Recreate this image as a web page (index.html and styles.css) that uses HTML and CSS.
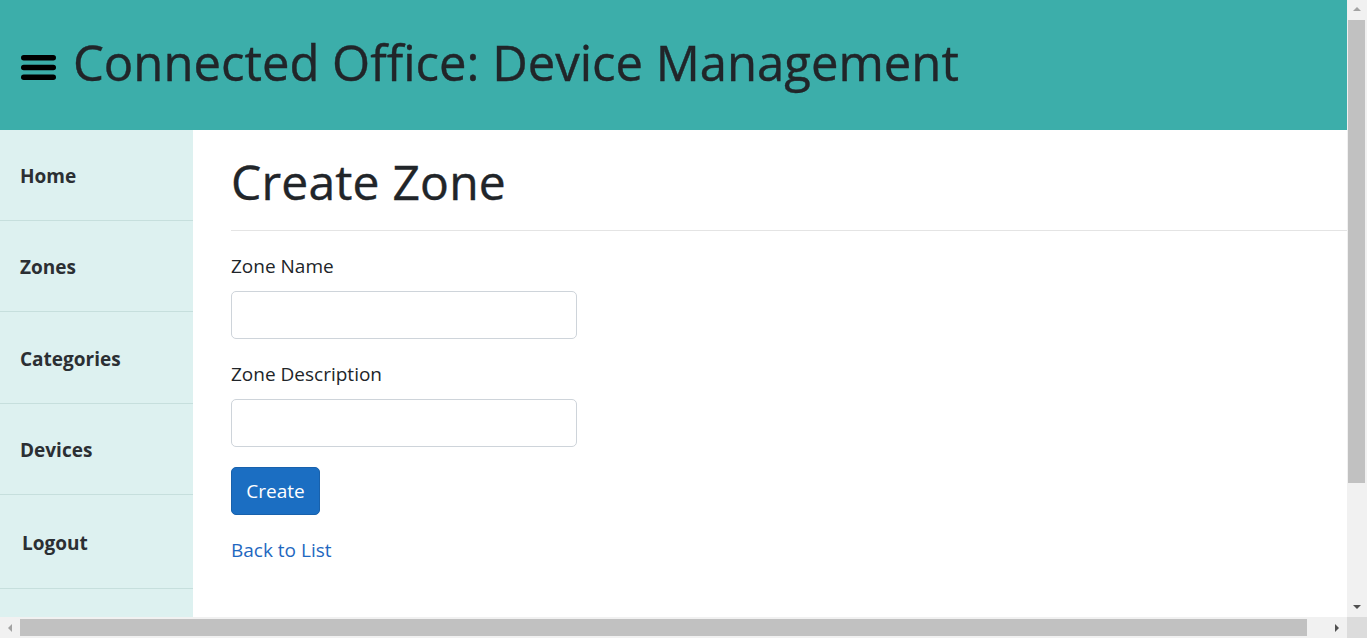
FILE: index.html
```html
<!DOCTYPE html>
<html lang="en">
<head>
<meta charset="utf-8">
<title>Create Zone - Connected Office</title>
<link rel="stylesheet" href="styles.css">
</head>
<body>
<div class="window">
  <div class="viewport">
    <div class="page">
      <header class="topbar">
        <svg class="burger" width="35" height="25" viewBox="0 0 35 25" aria-hidden="true">
          <rect x="0" y="0" width="35" height="5.5" rx="2.75" fill="#000"/>
          <rect x="0" y="9.75" width="35" height="5.5" rx="2.75" fill="#000"/>
          <rect x="0" y="19.5" width="35" height="5.5" rx="2.75" fill="#000"/>
        </svg>
        <h1 class="brand">Connected Office: Device Management</h1>
      </header>
      <div class="body-row">
        <nav class="sidebar">
          <a class="nav-item nav-home" href="#">Home</a>
          <a class="nav-item nav-zones" href="#">Zones</a>
          <a class="nav-item nav-categories" href="#">Categories</a>
          <a class="nav-item nav-devices" href="#">Devices</a>
          <a class="nav-item nav-logout" href="#">Logout</a>
        </nav>
        <main class="content">
          <h1 class="page-title">Create Zone</h1>
          <hr class="divider">
          <form class="zone-form">
            <div class="form-group">
              <label class="form-label" for="zname">Zone Name</label>
              <input class="form-input" id="zname" type="text">
            </div>
            <div class="form-group">
              <label class="form-label" for="zdesc">Zone Description</label>
              <input class="form-input" id="zdesc" type="text">
            </div>
            <div class="form-group">
              <button class="btn-primary" type="button">Create</button>
            </div>
          </form>
          <div class="back">
            <a class="back-link" href="#">Back to List</a>
          </div>
        </main>
      </div>
    </div>
  </div>
  <div class="vscroll" aria-hidden="true">
    <div class="sb-btn"><span class="tri tri-up"></span></div>
    <div class="vtrack"><div class="vthumb"></div></div>
    <div class="sb-btn"><span class="tri tri-down"></span></div>
  </div>
  <div class="hscroll" aria-hidden="true">
    <div class="sb-btn"><span class="tri tri-left"></span></div>
    <div class="htrack"><div class="hthumb"></div></div>
    <div class="sb-btn"><span class="tri tri-right"></span></div>
  </div>
  <div class="sb-corner" aria-hidden="true"></div>
</div>
</body>
</html>
```
FILE: styles.css
```css
html, body {
  margin: 0;
  padding: 0;
  overflow: hidden;
}
body {
  font-family: "Open Sans", "Noto Sans", "Liberation Sans", sans-serif;
  color: #212529;
  background: #fff;
}
.window {
  width: 1367px;
  height: 638px;
  display: grid;
  grid-template-columns: 1347px 20px;
  grid-template-rows: 617px 21px;
}
.viewport {
  overflow: hidden;
}

/* scrollbars */
.vscroll {
  background: #f1f1f1;
  display: flex;
  flex-direction: column;
}
.hscroll {
  background: #f1f1f1;
  display: flex;
}
.sb-btn {
  flex: none;
  width: 20px;
  height: 20px;
  display: flex;
  align-items: center;
  justify-content: center;
}
.hscroll .sb-btn {
  height: 21px;
}
.vtrack {
  flex: 1;
  padding: 0 2px 0 1px;
}
.vthumb {
  height: 463px;
  background: #c1c1c1;
}
.htrack {
  flex: 1;
  padding: 2px 0;
}
.hthumb {
  width: 1287px;
  height: 100%;
  background: #c1c1c1;
}
.sb-corner {
  background: #dcdcdc;
}
.tri {
  width: 0;
  height: 0;
  border: 4px solid transparent;
}
.tri-up {
  border-top-width: 0;
  border-bottom-color: #a3a3a3;
  margin-top: -2px;
}
.tri-down {
  border-bottom-width: 0;
  border-top-color: #505050;
}
.tri-left {
  border-left-width: 0;
  border-right-color: #a3a3a3;
}
.tri-right {
  border-right-width: 0;
  border-left-color: #505050;
}

/* page */
.page {
  width: 1368px;
  min-height: 771px;
  display: flex;
  flex-direction: column;
}
.topbar {
  height: 130px;
  box-sizing: border-box;
  background: #3caeaa;
  display: flex;
  align-items: center;
  gap: 17px;
  padding: 0 0 6px 21px;
  flex: none;
}
.burger {
  display: block;
  flex: none;
  margin-top: 11px;
}
.brand {
  margin: 0;
  font-size: 49px;
  font-weight: 400;
  line-height: 60px;
  color: #212529;
  letter-spacing: 0;
  -webkit-text-stroke: 0.4px #212529;
}
.body-row {
  flex: 1;
  display: flex;
}
.sidebar {
  width: 193px;
  flex: none;
  background: #ddf1f0;
  display: flex;
  flex-direction: column;
}
.nav-item {
  display: flex;
  align-items: center;
  box-sizing: border-box;
  padding: 2px 0 0 20px;
  border-bottom: 1px solid #c6dfdd;
  color: #2b2f33;
  font-weight: 700;
  font-size: 19px;
  text-decoration: none;
}
.nav-home { height: 91px; }
.nav-zones { height: 91px; }
.nav-categories { height: 92px; }
.nav-devices { height: 91px; }
.nav-logout {
  height: 94px;
  padding-left: 22px;
}
.content {
  flex: 1;
  padding: 22px 0 0 38px;
}
.page-title {
  margin: 0 0 18px;
  font-size: 48px;
  font-weight: 400;
  line-height: 60px;
  color: #212529;
  letter-spacing: 0.2px;
  -webkit-text-stroke: 0.4px #212529;
}
.divider {
  margin: 0 0 20px;
  border: 0;
  border-top: 1px solid #e4e4e4;
}
.zone-form {
  margin: 0;
}
.form-group {
  margin-bottom: 20px;
}
.form-label {
  display: block;
  font-size: 19px;
  line-height: 30px;
  margin-bottom: 10px;
  color: #212529;
}
.form-input {
  display: block;
  box-sizing: border-box;
  width: 346px;
  height: 48px;
  border: 1px solid #ced4da;
  border-radius: 5px;
  background: #fff;
  font: inherit;
  font-size: 19px;
  padding: 0 15px;
}
.btn-primary {
  box-sizing: border-box;
  height: 48px;
  width: 89px;
  padding: 0;
  border: 1px solid #1861ac;
  border-radius: 5px;
  background: #1b6ec2;
  color: #fff;
  font: inherit;
  font-size: 19px;
}
.back {
  margin-top: 0;
}
.back-link {
  font-size: 19px;
  line-height: 30px;
  color: #1f68c0;
  text-decoration: none;
}
```
